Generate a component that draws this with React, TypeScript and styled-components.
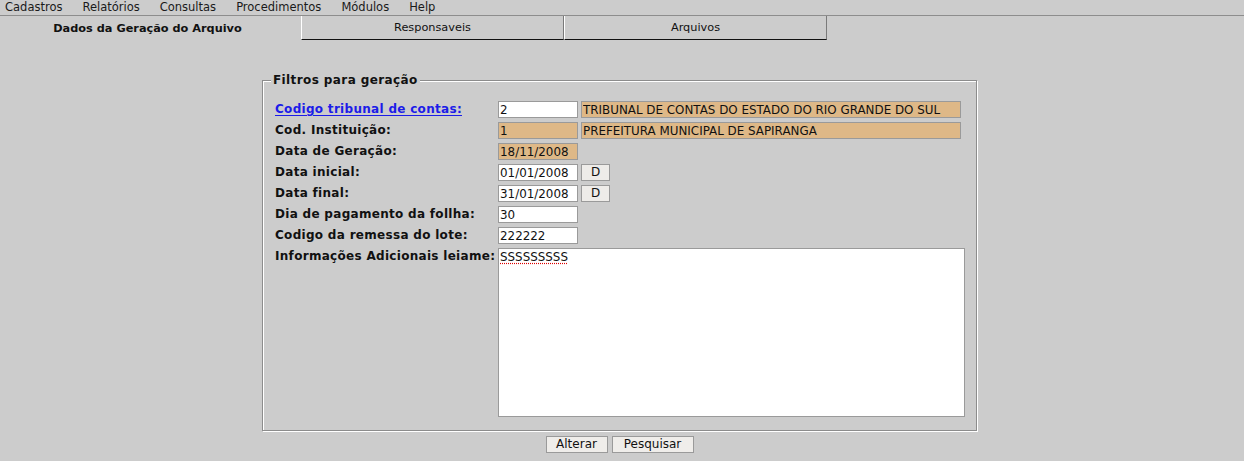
import React from "react";
import styled, { createGlobalStyle } from "styled-components";

const GlobalStyle = createGlobalStyle`
  html, body { margin: 0; padding: 0; background: #cccccc; }
  body { font-family: "DejaVu Sans", "Liberation Sans", sans-serif; color: #111111; }
  * { box-sizing: border-box; }
`;

const Page = styled.div`
  width: 1244px;
  height: 461px;
  background: #cccccc;
  overflow: hidden;
`;

const MenuBar = styled.div`
  display: flex;
  height: 16px;
  padding-left: 5px;
  gap: 20px;
  border-bottom: 1px solid #8d8d8d;
  font-size: 11.5px;
  line-height: 15px;
  color: #1a1a1a;
`;

const MenuItem = styled.span`
  white-space: nowrap;
`;

const TabBar = styled.div`
  display: flex;
  height: 24px;
`;

const Tab = styled.div<{ $active?: boolean; $w: number }>`
  width: ${(p) => p.$w}px;
  height: 24px;
  display: flex;
  align-items: center;
  justify-content: center;
  padding-right: ${(p) => (p.$active ? "6px" : "0")};
  font-size: 11.3px;
  white-space: nowrap;
  color: #111;
  font-weight: ${(p) => (p.$active ? 700 : 400)};
  border-left: ${(p) => (p.$active ? "none" : "1px solid #ffffff")};
  border-right: ${(p) => (p.$active ? "none" : "1px solid #7a7a7a")};
  border-bottom: ${(p) => (p.$active ? "none" : "1px solid #111111")};
`;

const Main = styled.div`
  margin-top: 40px;
`;

const Group = styled.div`
  position: relative;
  margin-left: 262px;
  width: 715px;
  border: 1px solid #8c8c8c;
  box-shadow: inset 1px 1px 0 #ffffff, 1px 1px 0 #ffffff;
  padding: 20px 12px 13px 12px;
`;

const Legend = styled.span`
  position: absolute;
  top: -8px;
  left: 8px;
  padding: 0 2px;
  background: #cccccc;
  font-size: 12px;
  font-weight: 700;
  letter-spacing: 0.4px;
  line-height: 15px;
  color: #111;
`;

const FormGrid = styled.div`
  display: grid;
  grid-template-columns: 223px auto;
  row-gap: 4px;
`;

const Label = styled.div<{ $link?: boolean }>`
  font-size: 12px;
  font-weight: 700;
  letter-spacing: 0.3px;
  line-height: 17px;
  height: 17px;
  white-space: nowrap;
  color: ${(p) => (p.$link ? "#1c1ce8" : "#111111")};
  text-decoration: ${(p) => (p.$link ? "underline" : "none")};
  text-underline-offset: 2px;
`;

const FieldRow = styled.div`
  display: flex;
  gap: 3px;
  height: 17px;
`;

const Field = styled.input<{ $w: number; $locked?: boolean }>`
  width: ${(p) => p.$w}px;
  height: 17px;
  margin: 0;
  padding: 0 1px;
  border: 1px solid #9a9a9a;
  border-radius: 0;
  outline: none;
  background: ${(p) => (p.$locked ? "#deb887" : "#ffffff")};
  font-family: "DejaVu Sans", sans-serif;
  font-size: 11.9px;
  line-height: 15px;
  color: #111111;
`;

const SmallButton = styled.button`
  width: 29px;
  height: 17px;
  margin: 0;
  padding: 0;
  border: 1px solid #9a9a9a;
  border-radius: 0;
  background: #eeece9;
  font-family: "DejaVu Sans", sans-serif;
  font-size: 12px;
  line-height: 15px;
  color: #111111;
`;

const Memo = styled.div`
  width: 467px;
  height: 169px;
  border: 1px solid #9a9a9a;
  background: #ffffff;
  padding: 0 1px;
  font-size: 11.9px;
  line-height: 17px;
  color: #111111;
`;

const Misspelled = styled.span`
  text-decoration: underline dotted #dd0000;
  text-underline-offset: 2px;
`;

const ButtonRow = styled.div`
  margin-left: 262px;
  margin-top: 5px;
  width: 715px;
  display: flex;
  justify-content: center;
  gap: 4px;
`;

const ActionButton = styled.button<{ $w: number }>`
  width: ${(p) => p.$w}px;
  height: 17px;
  margin: 0;
  padding: 0;
  border: 1px solid #9a9a9a;
  border-radius: 0;
  background: #efedea;
  font-family: "DejaVu Sans", sans-serif;
  font-size: 12px;
  line-height: 15px;
  color: #111111;
`;

export default function App() {
  return (
    <Page>
      <GlobalStyle />
      <MenuBar>
        <MenuItem>Cadastros</MenuItem>
        <MenuItem>Relatórios</MenuItem>
        <MenuItem>Consultas</MenuItem>
        <MenuItem>Procedimentos</MenuItem>
        <MenuItem>Módulos</MenuItem>
        <MenuItem>Help</MenuItem>
      </MenuBar>
      <TabBar>
        <Tab $active $w={301}>Dados da Geração do Arquivo</Tab>
        <Tab $w={263}>Responsaveis</Tab>
        <Tab $w={263}>Arquivos</Tab>
      </TabBar>
      <Main>
        <Group>
          <Legend>Filtros para geração</Legend>
          <FormGrid>
            <Label $link>Codigo tribunal de contas:</Label>
            <FieldRow>
              <Field $w={80} defaultValue="2" />
              <Field $w={380} $locked defaultValue="TRIBUNAL DE CONTAS DO ESTADO DO RIO GRANDE DO SUL" />
            </FieldRow>
            <Label>Cod. Instituição:</Label>
            <FieldRow>
              <Field $w={80} $locked defaultValue="1" />
              <Field $w={380} $locked defaultValue="PREFEITURA MUNICIPAL DE SAPIRANGA" />
            </FieldRow>
            <Label>Data de Geração:</Label>
            <FieldRow>
              <Field $w={80} $locked defaultValue="18/11/2008" />
            </FieldRow>
            <Label>Data inicial:</Label>
            <FieldRow>
              <Field $w={80} defaultValue="01/01/2008" />
              <SmallButton>D</SmallButton>
            </FieldRow>
            <Label>Data final:</Label>
            <FieldRow>
              <Field $w={80} defaultValue="31/01/2008" />
              <SmallButton>D</SmallButton>
            </FieldRow>
            <Label>Dia de pagamento da follha:</Label>
            <FieldRow>
              <Field $w={80} defaultValue="30" />
            </FieldRow>
            <Label>Codigo da remessa do lote:</Label>
            <FieldRow>
              <Field $w={80} defaultValue="222222" />
            </FieldRow>
            <Label>Informações Adicionais leiame:</Label>
            <Memo>
              <Misspelled>SSSSSSSSS</Misspelled>
            </Memo>
          </FormGrid>
        </Group>
        <ButtonRow>
          <ActionButton $w={62}>Alterar</ActionButton>
          <ActionButton $w={82}>Pesquisar</ActionButton>
        </ButtonRow>
      </Main>
    </Page>
  );
}
